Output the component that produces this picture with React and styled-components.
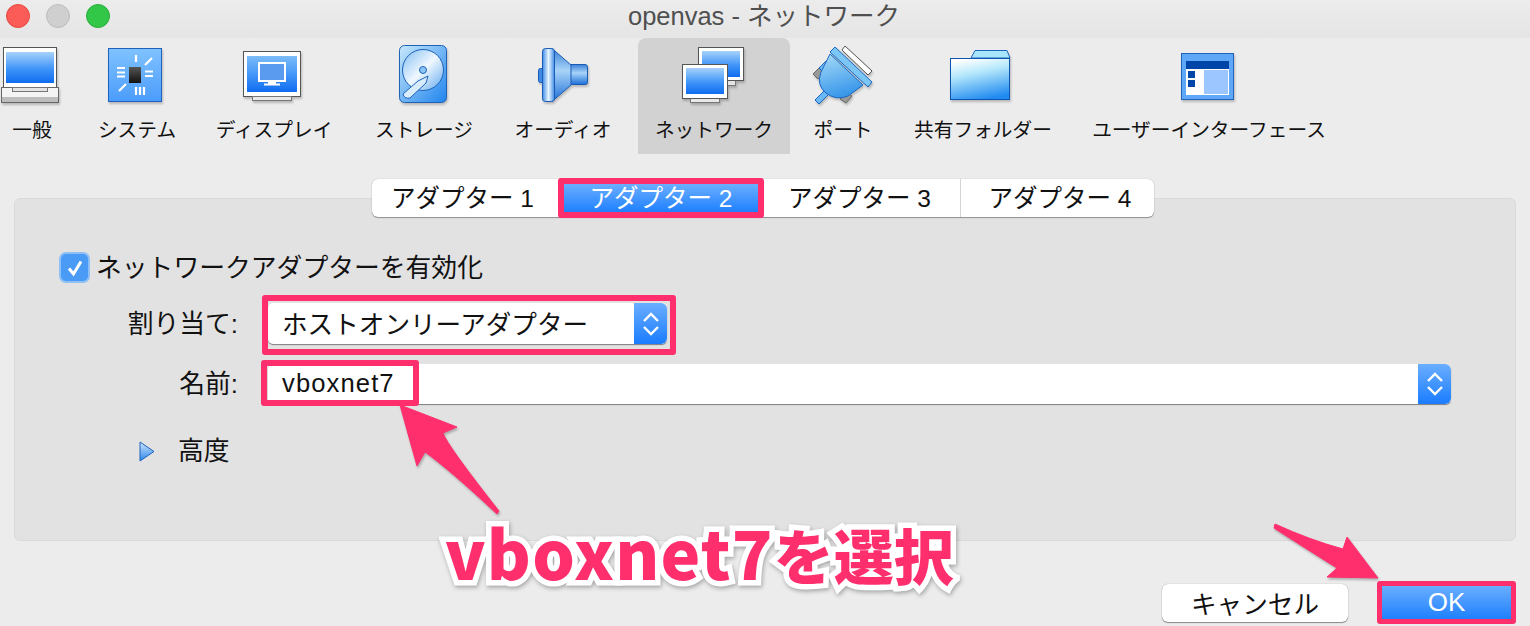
import React from 'react';
import styled, { createGlobalStyle } from 'styled-components';

const PINK = '#ff2f6e';

const GlobalStyle = createGlobalStyle`
  html, body {
    margin: 0;
    padding: 0;
    background: #ececec;
  }
  * {
    box-sizing: border-box;
  }
`;

const Page = styled.div`
  position: relative;
  width: 1530px;
  height: 626px;
  overflow: hidden;
  background: #ececec;
  font-family: "Liberation Sans", "Noto Sans CJK JP", sans-serif;
  color: #111;
  display: flex;
  flex-direction: column;
`;

const TitleBar = styled.div`
  position: relative;
  height: 38px;
  flex: none;
  display: flex;
  padding: 4px 0 0 6px;
  gap: 16px;
  background: linear-gradient(#ececec, #e5e5e5);
`;

const Light = styled.span`
  width: 24px;
  height: 24px;
  border-radius: 50%;
  background: ${(p) => p.$color};
  border: 1px solid ${(p) => p.$edge};
`;

const Title = styled.div`
  position: absolute;
  left: 0;
  right: 0;
  top: 0;
  padding-right: 2px;
  text-align: center;
  font-size: 25.5px;
  line-height: 32px;
  color: #4f4f4f;
`;

const Toolbar = styled.div`
  display: flex;
  height: 116px;
  flex: none;
`;

const ToolItem = styled.div`
  width: ${(p) => p.$w}px;
  margin-left: ${(p) => p.$ml || 0}px;
  flex: none;
  height: 116px;
  padding-top: 4px;
  display: flex;
  flex-direction: column;
  align-items: center;
  border-radius: 8px 8px 0 0;
  background: ${(p) => (p.$active ? '#d2d2d2' : 'transparent')};
  svg {
    flex: none;
    overflow: visible;
    filter: drop-shadow(1px 2px 1px rgba(0, 0, 0, 0.22));
  }
`;

const ToolLabel = styled.div`
  margin-top: 14px;
  font-size: 19.7px;
  line-height: 20px;
  white-space: nowrap;
`;

const Content = styled.div`
  padding: 25px 14px 0;
  display: flex;
  flex-direction: column;
`;

const TabBar = styled.div`
  position: relative;
  z-index: 1;
  align-self: flex-start;
  margin: 0 0 -19px 358px;
  height: 38px;
  display: flex;
  background: #fff;
  border-radius: 6px;
  box-shadow: 0 1px 1px rgba(0, 0, 0, 0.35), 0 0 1px rgba(0, 0, 0, 0.3);
`;

const Tab = styled.div`
  width: ${(p) => p.$w}px;
  display: flex;
  align-items: center;
  justify-content: center;
  padding: 0 ${(p) => p.$pr || 0}px 3px ${(p) => p.$pl || 0}px;
  font-size: 24.5px;
  white-space: nowrap;
  border-left: ${(p) => (p.$divider ? '1px solid #d4d4d4' : 'none')};
`;

const ActiveTab = styled(Tab)`
  margin: -1px 0;
  height: 40px;
  width: 206px;
  border: 6px solid ${PINK};
  border-radius: 3px;
  color: #fff;
  background: linear-gradient(#6aaeff, #1f80ff);
`;

const Panel = styled.div`
  height: 343px;
  background: #e2e2e2;
  border: 1px solid #dadada;
  border-radius: 6px;
  padding-top: 53px;
  display: flex;
  flex-direction: column;
`;

const CheckRow = styled.div`
  display: flex;
  align-items: center;
  height: 31px;
  padding-left: 44px;
  font-size: 25.8px;
  white-space: nowrap;
`;

const CheckBox = styled.span`
  width: 31px;
  height: 31px;
  margin-right: 6px;
  display: flex;
  align-items: center;
  justify-content: center;
  background: #4a9bf5;
  border: 2px solid #8fc0f5;
  border-radius: 7px;
`;

const RaisedText = styled.span`
  padding-bottom: ${(p) => p.$up}px;
  letter-spacing: ${(p) => p.$spacing || 0}px;
`;

const FieldRow = styled.div`
  display: flex;
  align-items: center;
  margin-top: 20px;
`;

const FieldLabel = styled.div`
  width: 223px;
  flex: none;
  text-align: right;
  font-size: 25.8px;
  line-height: 30px;
  white-space: nowrap;
`;

const Combo = styled.div`
  position: relative;
  margin-left: 30px;
  height: ${(p) => p.$h}px;
  width: ${(p) => p.$width}px;
  display: flex;
  align-items: center;
  justify-content: space-between;
  padding-left: 14px;
  background: #fff;
  border-radius: 5px;
  font-size: 25.6px;
  white-space: nowrap;
  box-shadow: 0 1px 1px rgba(0, 0, 0, 0.45);
`;

const Stepper = styled.span`
  width: 33px;
  height: 100%;
  flex: none;
  display: flex;
  align-items: center;
  justify-content: center;
  background: linear-gradient(#6aaeff, #1a7cff);
  border-radius: 0 6px 6px 0;
`;

const Highlight = styled.div`
  position: absolute;
  left: ${(p) => p.$l}px;
  top: ${(p) => p.$t}px;
  width: ${(p) => p.$w}px;
  height: ${(p) => p.$h}px;
  border: 6px solid ${PINK};
  border-radius: 3px;
`;

const AdvancedRow = styled.div`
  display: flex;
  align-items: center;
  height: 30px;
  margin-top: 32px;
  padding-left: 124px;
  font-size: 25.8px;
  gap: 23px;
`;

const Footer = styled.div`
  margin-top: 40px;
  height: 43px;
  display: flex;
  justify-content: flex-end;
  align-items: center;
  gap: 29px;
`;

const CancelButton = styled.button`
  width: 186px;
  height: 38px;
  padding: 0 0 3px;
  border: none;
  border-radius: 6px;
  background: #fff;
  font: inherit;
  font-size: 25.6px;
  color: #111;
  box-shadow: 0 1px 1px rgba(0, 0, 0, 0.4), 0 0 1px rgba(0, 0, 0, 0.4);
`;

const OkButton = styled.button`
  width: 139px;
  height: 43px;
  padding: 0;
  border: 5px solid ${PINK};
  border-radius: 3px;
  background: linear-gradient(#6aaeff, #1f80ff);
  font: inherit;
  font-size: 26px;
  color: #fff;
`;

const ArrowLayer = styled.svg`
  position: absolute;
  left: 0;
  top: 0;
  pointer-events: none;
  filter: drop-shadow(1px 2px 1px rgba(0, 0, 0, 0.25));
`;

const Caption = styled.div`
  position: absolute;
  left: 445px;
  top: 505px;
  font-size: 60px;
  line-height: 92px;
  font-weight: 900;
  white-space: nowrap;
  color: ${PINK};
  -webkit-text-stroke: 11px #fff;
  paint-order: stroke fill;
  filter: drop-shadow(1px 2px 2px rgba(0, 0, 0, 0.3));
  font-family: "Noto Sans CJK JP", sans-serif;
`;

const CaptionLatin = styled.span`
  font-size: 67px;
  letter-spacing: 1.2px;
`;

// viewBox in page coordinates so the drawings can be read straight off the screenshot
const Icon = ({ c, children }) => (
  <svg width="72" height="64" viewBox={`${c - 36} 42 72 64`}>
    {children}
  </svg>
);

const Blue = ({ id, from = '#a6d2fb', to = '#0f6cf0' }) => (
  <linearGradient id={id} x1="0" y1="0" x2="0" y2="1">
    <stop offset="0" stopColor={from} />
    <stop offset="0.55" stopColor="#3f94f8" />
    <stop offset="1" stopColor={to} />
  </linearGradient>
);

const GeneralIcon = () => (
  <Icon c={32}>
    <defs><Blue id="gen" /></defs>
    <rect x="3.5" y="47.5" width="53" height="40" fill="#fff" stroke="#555" />
    <rect x="6" y="52" width="48" height="31" fill="url(#gen)" />
    <rect x="1.5" y="87.5" width="57" height="15" fill="#f4f4f4" stroke="#666" />
    <rect x="2" y="97" width="56" height="5" fill="#bdbdbd" />
    <rect x="12.5" y="87.5" width="35" height="4" fill="#e4e4e4" stroke="#777" />
  </Icon>
);

const SystemIcon = () => (
  <Icon c={137}>
    <defs>
      <linearGradient id="sys" x1="0" y1="0" x2="0" y2="1">
        <stop offset="0" stopColor="#7fc2ff" />
        <stop offset="1" stopColor="#4b9cfb" />
      </linearGradient>
      <linearGradient id="chip" x1="0" y1="0" x2="0" y2="1">
        <stop offset="0" stopColor="#555" />
        <stop offset="1" stopColor="#111" />
      </linearGradient>
    </defs>
    <rect x="108.5" y="48.5" width="53" height="53" fill="url(#sys)" stroke="#1f63bd" />
    <rect x="129" y="67" width="12" height="16" fill="url(#chip)" />
    <g stroke="#fff" strokeWidth="2.2">
      <path d="M136 55v7M152 58l-7 7M117 68h8M117 72.5h8M117 76.5h8M145 71.5h8M145 76h8M126 84l-7 7M136 87v8M140 87v8M144 87v8" />
    </g>
  </Icon>
);

const DisplayIcon = () => (
  <Icon c={274}>
    <defs><Blue id="dsp" from="#7cbcf9" /></defs>
    <rect x="243.5" y="51.5" width="57" height="45" fill="#fff" stroke="#555" />
    <rect x="247" y="56" width="50" height="36" fill="url(#dsp)" />
    <rect x="252.5" y="96.5" width="39" height="4" fill="#e8e8e8" stroke="#777" />
    <rect x="259" y="63" width="26" height="18" fill="#5a9bf0" stroke="#fff" strokeWidth="2" />
    <path d="M268 82h8v1.5h-8zM264 83.500h16v2h-16z" fill="#fff" />
  </Icon>
);

const StorageIcon = () => (
  <Icon c={424}>
    <defs>
      <linearGradient id="sto" x1="0" y1="0" x2="1" y2="1">
        <stop offset="0" stopColor="#c8e8fb" />
        <stop offset="1" stopColor="#1f84ee" />
      </linearGradient>
      <linearGradient id="dsk" x1="0" y1="0" x2="1" y2="1">
        <stop offset="0" stopColor="#7fbdf2" />
        <stop offset="0.5" stopColor="#f0f8ff" />
        <stop offset="1" stopColor="#5ea8ee" />
      </linearGradient>
    </defs>
    <rect x="399.500" y="45.500" width="47" height="57" rx="5" fill="url(#sto)" stroke="#1e63b8" />
    <circle cx="423" cy="70" r="20.500" fill="url(#dsk)" stroke="#1e63b8" />
    <circle cx="423" cy="70" r="3.500" fill="#8cc4f5" stroke="#1e63b8" />
    <path d="M428 76 L426 83 L410 98 Q404 99 403 94 L418 81Z" fill="#d9ecfb" stroke="#1e63b8" />
  </Icon>
);

const AudioIcon = () => (
  <Icon c={563}>
    <defs>
      <linearGradient id="aud" x1="0" y1="0" x2="0" y2="1">
        <stop offset="0" stopColor="#3a80d8" />
        <stop offset="0.42" stopColor="#a8d4f8" />
        <stop offset="1" stopColor="#1e6fd8" />
      </linearGradient>
      <linearGradient id="audh" x1="0" y1="0" x2="1" y2="0">
        <stop offset="0" stopColor="#3f8be6" />
        <stop offset="0.5" stopColor="#e9f5ff" />
        <stop offset="1" stopColor="#3f8be6" />
      </linearGradient>
    </defs>
    <rect x="538.500" y="68.500" width="6" height="14" rx="2" fill="#3f8be6" stroke="#1a5cb5" />
    <path d="M570 64.500h15a2.500 2.500 0 0 1 2.500 2.500v15a2.500 2.500 0 0 1-2.500 2.500h-15z" fill="url(#aud)" stroke="#1a5cb5" />
    <path d="M552 48.500 L571 65v20 L552 101.500z" fill="url(#aud)" stroke="#1a5cb5" />
    <rect x="542.500" y="48.500" width="12" height="53" rx="3" fill="url(#audh)" stroke="#1a5cb5" />
  </Icon>
);

const NetworkIcon = () => (
  <Icon c={714}>
    <defs><Blue id="net" /></defs>
    <rect x="727.500" y="80.500" width="8" height="5" fill="#e4e4e4" stroke="#777" />
    <rect x="698.500" y="47.500" width="45" height="33" fill="#fff" stroke="#555" />
    <rect x="702" y="51" width="38" height="26" fill="url(#net)" />
    <rect x="690.500" y="98.500" width="29" height="4" fill="#e8e8e8" stroke="#777" />
    <rect x="682.500" y="64.500" width="45" height="34" fill="#fff" stroke="#555" />
    <rect x="686" y="68" width="38" height="26" fill="url(#net)" />
  </Icon>
);

const PortIcon = () => (
  <Icon c={843}>
    <defs>
      <linearGradient id="prt" x1="0" y1="0" x2="0.3" y2="1">
        <stop offset="0" stopColor="#a9dcf8" />
        <stop offset="1" stopColor="#3a98ea" />
      </linearGradient>
    </defs>
    <path d="M845 46 L872 71 L868 75 L842 50Z" fill="#fff" stroke="#555" />
    <path d="M813 74 L819 68 L824 73 L818 79Z" fill="#999" stroke="#666" />
    <path d="M819 68 L826 61 L830 66 L824 73Z" fill="#6ab8f5" stroke="#1a66c0" />
    <path d="M840 99 L847 92 L852 96 L846 103Z" fill="#999" stroke="#666" />
    <path d="M815 100 L825 90 L829 94 L819 104Z" fill="#6ab8f5" stroke="#1a66c0" />
    <path d="M830 54 L821 72 Q816 85 826 93 Q836 101 848 96 L863 85Z" fill="url(#prt)" stroke="#1a66c0" />
    <path d="M835 47 L872 82 L868 87 L830 52Z" fill="#7cc6f5" stroke="#1a66c0" />
  </Icon>
);

const FolderIcon = () => (
  <Icon c={983}>
    <defs>
      <linearGradient id="fld" x1="0.3" y1="0" x2="0.6" y2="1">
        <stop offset="0" stopColor="#fff" />
        <stop offset="0.35" stopColor="#b5e8fb" />
        <stop offset="1" stopColor="#1f8af0" />
      </linearGradient>
    </defs>
    <path d="M971 58 L975 50.500 H1007 L1010 58Z" fill="#a8e6fb" stroke="#1a66c0" />
    <rect x="950.500" y="58.500" width="59" height="41" fill="url(#fld)" stroke="#0f55b0" />
  </Icon>
);

const InterfaceIcon = () => (
  <Icon c={1209}>
    <rect x="1181.500" y="53.500" width="52" height="46" fill="#5fa8f8" stroke="#1f63bd" />
    <rect x="1186" y="61" width="43" height="34" fill="#fff" />
    <rect x="1186" y="61" width="43" height="8" fill="#0046a8" />
    <rect x="1204" y="70" width="24" height="24" fill="#9cc6ff" />
    <rect x="1188" y="71" width="7" height="7" fill="#0046a8" />
    <rect x="1188" y="80" width="7" height="7" fill="#0046a8" />
  </Icon>
);

const Chevrons = () => (
  <svg width="20" height="28" viewBox="0 0 20 28" fill="none" stroke="#fff" strokeWidth="2.4">
    <path d="M3 11 L10 4 L17 11M3 17 L10 24 L17 17" />
  </svg>
);

const toolItems = [
  { label: '一般', w: 64, icon: <GeneralIcon /> },
  { label: 'システム', w: 146, icon: <SystemIcon /> },
  { label: 'ディスプレイ', w: 128, icon: <DisplayIcon /> },
  { label: 'ストレージ', w: 172, icon: <StorageIcon /> },
  { label: 'オーディオ', w: 106, icon: <AudioIcon /> },
  { label: 'ネットワーク', w: 152, ml: 22, active: true, icon: <NetworkIcon /> },
  { label: 'ポート', w: 106, icon: <PortIcon /> },
  { label: '共有フォルダー', w: 174, icon: <FolderIcon /> },
  { label: 'ユーザーインターフェース', w: 278, icon: <InterfaceIcon /> },
];

const App = () => {
  return (
    <Page>
      <GlobalStyle />
      <TitleBar>
        <Light $color="#fc5c57" $edge="#e5483f" />
        <Light $color="#cfcfcf" $edge="#bcbcbc" />
        <Light $color="#33c748" $edge="#2aac3a" />
        <Title>openvas - ネットワーク</Title>
      </TitleBar>

      <Toolbar>
        {toolItems.map((item) => (
          <ToolItem key={item.label} $w={item.w} $ml={item.ml} $active={item.active}>
            {item.icon}
            <ToolLabel>{item.label}</ToolLabel>
          </ToolItem>
        ))}
      </Toolbar>

      <Content>
        <TabBar>
          <Tab $w={186} $pr={5}>アダプター 1</Tab>
          <ActiveTab>アダプター 2</ActiveTab>
          <Tab $w={196} $pr={5}>アダプター 3</Tab>
          <Tab $w={194} $divider $pl={5}>アダプター 4</Tab>
        </TabBar>

        <Panel>
          <CheckRow>
            <CheckBox>
              <svg width="20" height="20" viewBox="0 0 20 20" fill="none" stroke="#fff" strokeWidth="3">
                <path d="M4 10.500 L8.500 16 L16 3.500" />
              </svg>
            </CheckBox>
            <RaisedText $up={4}>ネットワークアダプターを有効化</RaisedText>
          </CheckRow>

          <FieldRow>
            <FieldLabel>割り当て:</FieldLabel>
            <Combo $h={41} $width={399}>
              <RaisedText $up={2}>ホストオンリーアダプター</RaisedText>
              <Stepper><Chevrons /></Stepper>
              <Highlight $l={-6} $t={-8} $w={414} $h={60} />
            </Combo>
          </FieldRow>

          <FieldRow>
            <FieldLabel>名前:</FieldLabel>
            <Combo $h={40} $width={1183}>
              <RaisedText $up={1} $spacing={1.1}>vboxnet7</RaisedText>
              <Stepper><Chevrons /></Stepper>
              <Highlight $l={-7} $t={-4} $w={158} $h={46} />
            </Combo>
          </FieldRow>

          <AdvancedRow>
            <svg width="16" height="21" viewBox="0 0 16 21">
              <defs>
                <linearGradient id="tri" x1="0" y1="0" x2="0" y2="1">
                  <stop offset="0" stopColor="#cfe6fb" />
                  <stop offset="1" stopColor="#2a86ec" />
                </linearGradient>
              </defs>
              <path d="M1 1 L15 10.500 L1 20Z" fill="url(#tri)" stroke="#1f63bd" />
            </svg>
            <RaisedText $up={6}>高度</RaisedText>
          </AdvancedRow>
        </Panel>

        <Footer>
          <CancelButton>キャンセル</CancelButton>
          <OkButton>OK</OkButton>
        </Footer>
      </Content>

      <ArrowLayer width="1530" height="626" viewBox="0 0 1530 626">
        <path d="M400 405 L457 427 L443 433 Q447 445 499 511 L497 514 Q450 470 425 452 L417 466Z" fill={PINK} stroke={PINK} strokeLinejoin="round" />
        <path d="M1275 524 Q1310 540 1343 549 L1347 537 L1378 578 L1327 577 L1337 568 Q1300 545 1274 528Z" fill={PINK} stroke={PINK} strokeLinejoin="round" />
      </ArrowLayer>

      <Caption>
        <CaptionLatin>vboxnet7</CaptionLatin>を選択
      </Caption>
    </Page>
  );
};

export default App;
